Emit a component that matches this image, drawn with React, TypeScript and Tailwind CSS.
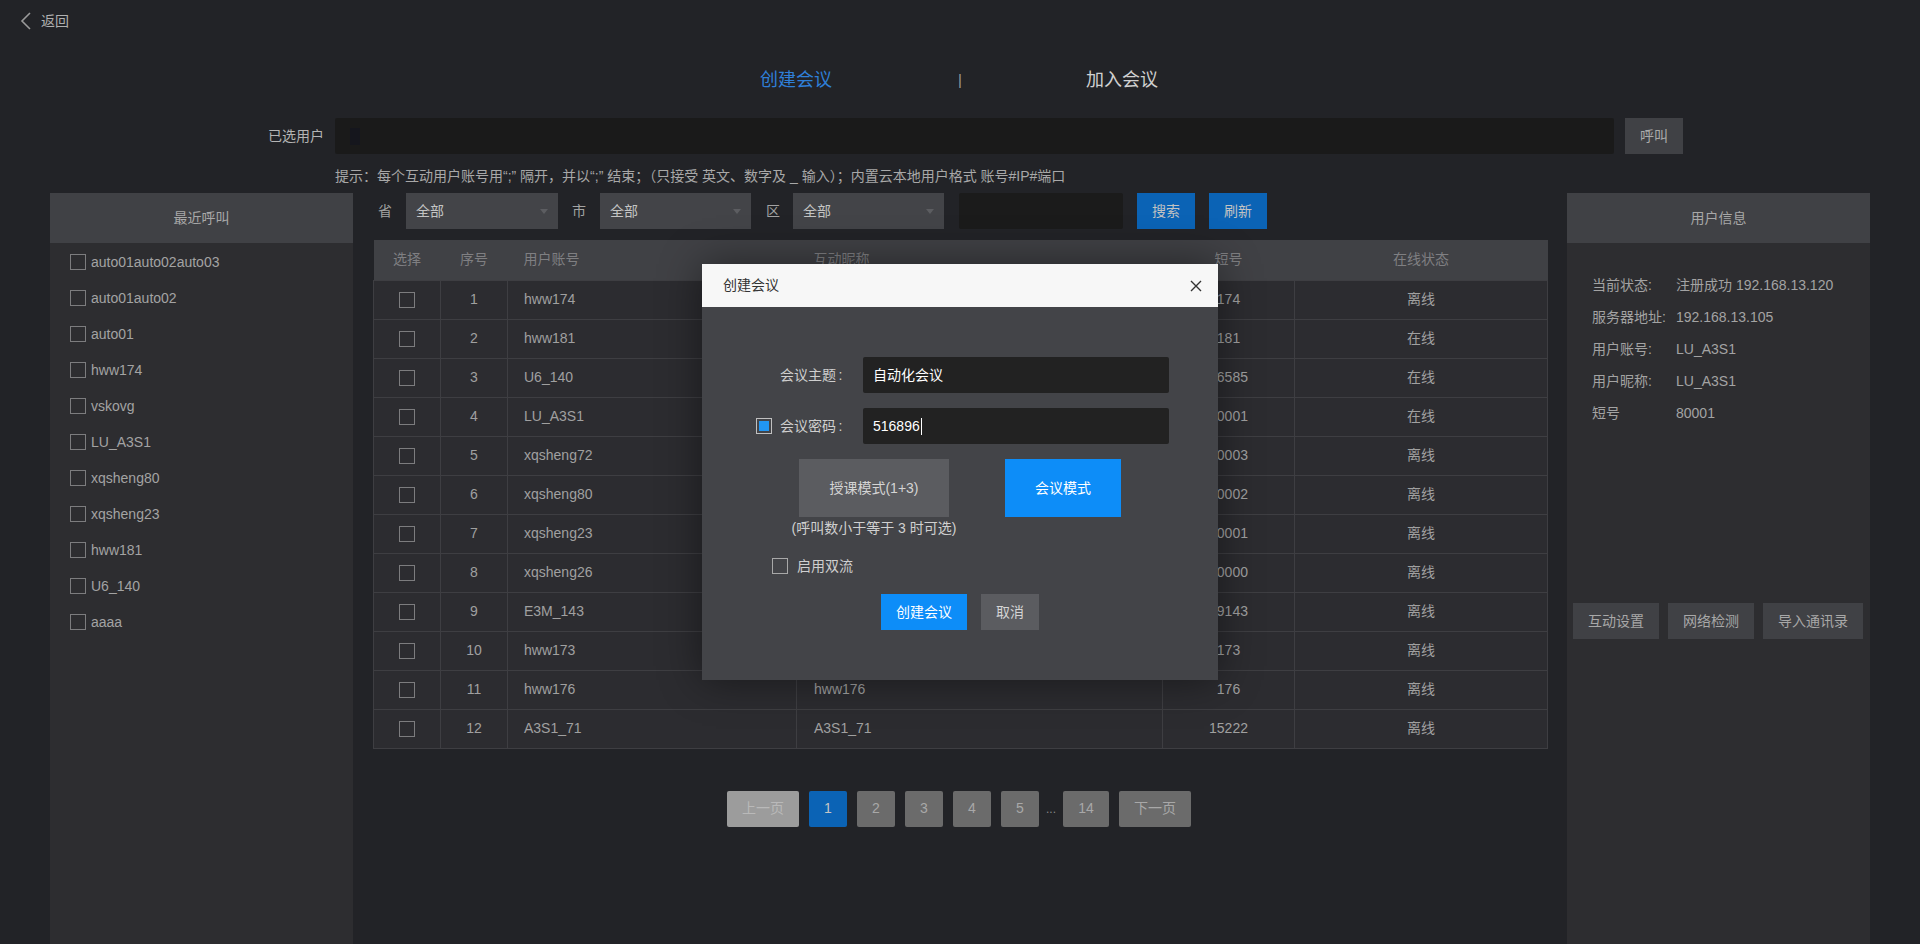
import React from "react";

const recent = [
  "auto01auto02auto03",
  "auto01auto02",
  "auto01",
  "hww174",
  "vskovg",
  "LU_A3S1",
  "xqsheng80",
  "xqsheng23",
  "hww181",
  "U6_140",
  "aaaa",
];

// nick column of rows 1-10 sits under the dialog
const rows = [
  { no: 1, acc: "hww174", nick: "", short: "174", online: false },
  { no: 2, acc: "hww181", nick: "", short: "181", online: true },
  { no: 3, acc: "U6_140", nick: "", short: "16585", online: true },
  { no: 4, acc: "LU_A3S1", nick: "", short: "80001", online: true },
  { no: 5, acc: "xqsheng72", nick: "", short: "80003", online: false },
  { no: 6, acc: "xqsheng80", nick: "", short: "80002", online: false },
  { no: 7, acc: "xqsheng23", nick: "", short: "80001", online: false },
  { no: 8, acc: "xqsheng26", nick: "", short: "80000", online: false },
  { no: 9, acc: "E3M_143", nick: "", short: "19143", online: false },
  { no: 10, acc: "hww173", nick: "", short: "173", online: false },
  { no: 11, acc: "hww176", nick: "hww176", short: "176", online: false },
  { no: 12, acc: "A3S1_71", nick: "A3S1_71", short: "15222", online: false },
];

const info = [
  ["当前状态:", "注册成功 192.168.13.120"],
  ["服务器地址:", "192.168.13.105"],
  ["用户账号:", "LU_A3S1"],
  ["用户昵称:", "LU_A3S1"],
  ["短号", "80001"],
];

const Box = () => (
  <span className="inline-block w-[16px] h-[16px] border border-[#7c7c7e] shrink-0"></span>
);

const Select = ({ w }: { w: string }) => (
  <div className={`${w} h-[36px] bg-[#434448] flex items-center justify-between pl-[10px] pr-[10px]`}>
    <span className="text-[#c4c4c4]">全部</span>
    <span className="w-0 h-0 border-x-[4px] border-x-transparent border-t-[5px] border-t-[#5c5d61]"></span>
  </div>
);

const Label = ({ text }: { text: string }) => (
  <span className="flex">
    {text}
    <span className="inline-block w-[9px] text-center">:</span>
  </span>
);

const App = () => {
  return (
    <div className="w-[1920px] h-[944px] overflow-hidden relative bg-[#222327] text-[14px] text-[#a3a3a3] font-['Liberation_Sans','Noto_Sans_CJK_SC',sans-serif]">
      {/* back */}
      <div className="h-[42px] flex items-center pl-[20px]">
        <svg width="12" height="18" viewBox="0 0 12 18" className="mr-[9px]">
          <polyline points="10,1 2,9 10,17" fill="none" stroke="#9a9a9a" strokeWidth="1.6" />
        </svg>
        <span className="text-[#b0b0b0]">返回</span>
      </div>

      {/* tabs */}
      <div className="h-[76px] flex justify-center items-center text-[18px]">
        <div className="w-[324px] text-center text-[#2f7fd8]">创建会议</div>
        <div className="text-[#9a9a9a] text-[15px]">|</div>
        <div className="w-[324px] text-center text-[#d0d0d0] pr-[4px]">加入会议</div>
      </div>

      {/* selected users */}
      <div className="h-[36px] flex items-center pl-[268px]">
        <span className="w-[56px] text-[#b4b4b4]">已选用户</span>
        <div className="ml-[11px] w-[1279px] h-[36px] bg-[#1a1a1a] rounded-[2px] flex items-center pl-[15px]">
          <span className="w-[10px] h-[17px] bg-[#15161d]"></span>
        </div>
        <button className="ml-[11px] w-[58px] h-[36px] bg-[#404145] text-[#aaa]">呼叫</button>
      </div>
      <div className="h-[39px] flex items-center pl-[335px] pt-[6px] text-[14px] text-[#a8a8a8] whitespace-nowrap">
        提示：每个互动用户账号用“;” 隔开，并以“;” 结束；（只接受 英文、数字及 _ 输入）；内置云本地用户格式 账号#IP#端口
      </div>

      {/* main */}
      <div className="h-[751px] flex pl-[50px] gap-[20px]">
        {/* recent */}
        <div className="w-[303px] bg-[#2d2d30] flex flex-col">
          <div className="h-[50px] bg-[#404145] flex items-center justify-center text-[#a8a8a8]">最近呼叫</div>
          <div className="pt-[1px]">
            {recent.map((r) => (
              <div key={r} className="h-[36px] flex items-center pl-[20px] gap-[5px]">
                <Box />
                <span className="text-[#a3a3a3]">{r}</span>
              </div>
            ))}
          </div>
        </div>

        {/* center */}
        <div className="w-[1174px] flex flex-col">
          <div className="h-[36px] flex items-center">
            <span className="ml-[5px] w-[14px]">省</span>
            <div className="ml-[14px]"><Select w="w-[152px]" /></div>
            <span className="ml-[14px] w-[14px]">市</span>
            <div className="ml-[14px]"><Select w="w-[151px]" /></div>
            <span className="ml-[15px] w-[14px]">区</span>
            <div className="ml-[13px]"><Select w="w-[151px]" /></div>
            <div className="ml-[15px] w-[164px] h-[36px] bg-[#1b1b1b] rounded-[2px]"></div>
            <button className="ml-[14px] w-[58px] h-[36px] bg-[#0b63b5] text-[#c2c2c2]">搜索</button>
            <button className="ml-[14px] w-[58px] h-[36px] bg-[#0b63b5] text-[#c2c2c2]">刷新</button>
          </div>

          <table className="mt-[11px] w-[1174px] border-collapse table-fixed">
            <colgroup>
              <col className="w-[67px]" />
              <col className="w-[67px]" />
              <col className="w-[289px]" />
              <col className="w-[366px]" />
              <col className="w-[132px]" />
              <col className="w-[253px]" />
            </colgroup>
            <thead>
              <tr className="h-[40px] bg-[#404145] text-[#7f7f82]">
                <th className="font-normal text-center">选择</th>
                <th className="font-normal text-center">序号</th>
                <th className="font-normal text-left pl-[16px]">用户账号</th>
                <th className="font-normal text-left pl-[17px]">互动昵称</th>
                <th className="font-normal text-center">短号</th>
                <th className="font-normal text-center">在线状态</th>
              </tr>
            </thead>
            <tbody>
              {rows.map((r) => (
                <tr key={r.no} className="h-[39px] bg-[#2c2c30] text-[#a0a0a0]">
                  <td className="border border-[#3e3e42] text-center">
                    <span className="inline-flex align-middle"><Box /></span>
                  </td>
                  <td className="border border-[#3e3e42] text-center">{r.no}</td>
                  <td className="border border-[#3e3e42] pl-[16px]">{r.acc}</td>
                  <td className="border border-[#3e3e42] pl-[17px]">{r.nick}</td>
                  <td className="border border-[#3e3e42] text-center">{r.short}</td>
                  <td className="border border-[#3e3e42] text-center">{r.online ? "在线" : "离线"}</td>
                </tr>
              ))}
            </tbody>
          </table>

          <div className="mt-[42px] flex justify-center items-center gap-[10px] text-[#a8a8a8] pr-[2px]">
            <button className="w-[72px] h-[36px] rounded-[2px] bg-[#9c9c9c] text-[#b9b9b9]">上一页</button>
            <button className="w-[38px] h-[36px] rounded-[2px] bg-[#0b63b5] text-[#c6c6c6]">1</button>
            {["2", "3", "4", "5"].map((p) => (
              <button key={p} className="w-[38px] h-[36px] rounded-[2px] bg-[#6b6b6b]">{p}</button>
            ))}
            <span className="-mx-[6px] w-[16px] text-center text-[12px] text-[#888]">...</span>
            <button className="w-[46px] h-[36px] rounded-[2px] bg-[#6b6b6b]">14</button>
            <button className="w-[72px] h-[36px] rounded-[2px] bg-[#6b6b6b]">下一页</button>
          </div>
        </div>

        {/* user info */}
        <div className="w-[303px] bg-[#2d2d30] flex flex-col">
          <div className="h-[50px] bg-[#404145] flex items-center justify-center text-[#a8a8a8]">用户信息</div>
          <div className="pt-[26px] pl-[25px]">
            {info.map(([k, v]) => (
              <div key={k} className="h-[32px] flex items-center">
                <span className="w-[84px] text-[#a3a3a3]">{k}</span>
                <span className="text-[#a3a3a3]">{v}</span>
              </div>
            ))}
          </div>
          <div className="mt-[174px] pl-[6px] flex gap-[9px] text-[#a8a8a8]">
            <button className="w-[86px] h-[36px] bg-[#404145]">互动设置</button>
            <button className="w-[86px] h-[36px] bg-[#404145]">网络检测</button>
            <button className="w-[100px] h-[36px] bg-[#404145]">导入通讯录</button>
          </div>
        </div>
      </div>

      {/* dialog */}
      <div className="absolute left-[702px] top-[264px] w-[516px] h-[416px] bg-[#434448] shadow-[0_0_40px_rgba(0,0,0,0.45)] flex flex-col">
        <div className="h-[43px] bg-[#f7f7f7] flex items-center justify-between pl-[21px] pr-[16px]">
          <span className="text-[#333]">创建会议</span>
          <svg width="12" height="12" viewBox="0 0 12 12">
            <path d="M1 1 L11 11 M11 1 L1 11" stroke="#333" strokeWidth="1.4" />
          </svg>
        </div>
        <div className="flex flex-col pt-[50px] text-[#cfcfcf]">
          <div className="h-[36px] flex items-center">
            <div className="w-[143px] flex justify-end"><Label text="会议主题" /></div>
            <div className="ml-[18px] w-[306px] h-[36px] bg-[#222222] rounded-[2px] flex items-center pl-[10px] text-white">自动化会议</div>
          </div>
          <div className="mt-[15px] h-[36px] flex items-center">
            <div className="w-[143px] flex justify-end items-center gap-[8px]">
              <span className="w-[16px] h-[16px] border border-[#c0c0c0] p-[2px] flex">
                <span className="flex-1 bg-[#2196f3]"></span>
              </span>
              <Label text="会议密码" />
            </div>
            <div className="ml-[18px] w-[306px] h-[36px] bg-[#222222] rounded-[2px] flex items-center pl-[10px] text-white">
              516896<span className="w-[1px] h-[17px] bg-white ml-[1px]"></span>
            </div>
          </div>
          <div className="mt-[15px] flex pl-[97px]">
            <div className="w-[150px] flex flex-col items-center">
              <button className="w-[150px] h-[58px] bg-[#5b5c60] text-[#d4d4d4]">授课模式(1+3)</button>
              <div className="h-[20px] flex items-center whitespace-nowrap text-[#d0d0d0] mt-[1px]">(呼叫数小于等于 3 时可选)</div>
            </div>
            <button className="ml-[56px] w-[116px] h-[58px] bg-[#0d8df8] text-white">会议模式</button>
          </div>
          <div className="mt-[16px] h-[24px] flex items-center pl-[70px] gap-[9px]">
            <span className="w-[16px] h-[16px] border border-[#a8a8a8]"></span>
            <span>启用双流</span>
          </div>
          <div className="mt-[16px] flex pl-[179px]">
            <button className="w-[86px] h-[36px] bg-[#0d8df8] text-white">创建会议</button>
            <button className="ml-[14px] w-[58px] h-[36px] bg-[#5b5c60] text-[#d4d4d4]">取消</button>
          </div>
        </div>
      </div>
    </div>
  );
};

export default App;
